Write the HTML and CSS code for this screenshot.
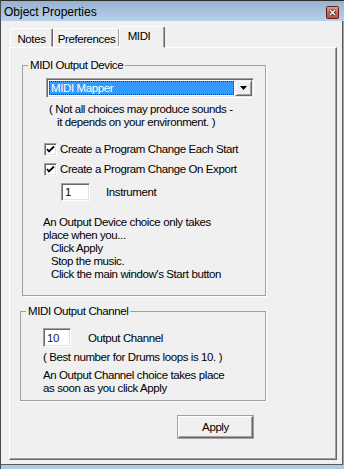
FILE: index.html
```html
<!DOCTYPE html>
<html lang="en">
	<head>
		<meta charset="UTF-8" />
		<meta name="viewport" content="width=device-width, initial-scale=1.0" />
		<title>Object Properties</title>

		<link rel="stylesheet" href="styles.css">
	</head>

	<body>
		<div class="window">
			<div class="titlebar">
				<span class="title">Object Properties</span>
				<span class="close">
					<svg width="13" height="13" viewBox="0 0 13 13">
						<defs>
							<linearGradient id="closeFill" x1="0" y1="0" x2="0" y2="1">
								<stop offset="0" stop-color="#e3a493" />
								<stop offset="0.5" stop-color="#c86554" />
								<stop offset="1" stop-color="#c2503f" />
							</linearGradient>
						</defs>
						<rect x="0.5" y="0.5" width="12" height="12" rx="1" fill="url(#closeFill)" stroke="#5e1e1e" />
						<path d="M4 4 L9 9 M9 4 L4 9" stroke="#3a1a1a" stroke-width="3" />
						<path d="M4 4 L9 9 M9 4 L4 9" stroke="#ffffff" stroke-width="1.5" />
					</svg>
				</span>
			</div>

			<div class="client">
				<div class="tabs">
					<div class="tab">Notes</div>
					<div class="tab">Preferences</div>
					<div class="tab tab--active">MIDI</div>
				</div>

				<div class="panel">
					<fieldset class="group group--device">
						<legend>MIDI Output Device</legend>

						<div class="combo">
							<span class="combo__value">MIDI Mapper</span>
							<span class="combo__button">
								<svg width="7" height="4" viewBox="0 0 7 4"><path d="M0 0 H7 L3.5 4 Z" fill="#000" /></svg>
							</span>
						</div>

						<p class="note">( Not all choices may produce sounds -<br /><span class="note__indent">it depends on your environment. )</span></p>

						<div class="check check--first">
							<span class="check__box">
								<svg width="9" height="9" viewBox="0 0 9 9"><path d="M1 4 L3 6.5 L8 1.5" stroke="#000" stroke-width="1.8" fill="none" /></svg>
							</span>
							<span>Create a Program Change Each Start</span>
						</div>
						<div class="check">
							<span class="check__box">
								<svg width="9" height="9" viewBox="0 0 9 9"><path d="M1 4 L3 6.5 L8 1.5" stroke="#000" stroke-width="1.8" fill="none" /></svg>
							</span>
							<span>Create a Program Change On Export</span>
						</div>

						<div class="field field--instrument">
							<span class="textbox textbox--instrument">1</span>
							<span>Instrument</span>
						</div>

						<p class="info info--device">
							An Output Device choice only takes<br />
							place when you...<br />
							<span class="info__step">Click Apply</span><br />
							<span class="info__step">Stop the music.</span><br />
							<span class="info__step">Click the main window's Start button</span>
						</p>
					</fieldset>

					<fieldset class="group group--channel">
						<legend>MIDI Output Channel</legend>

						<div class="field field--channel">
							<span class="textbox textbox--channel">10</span>
							<span>Output Channel</span>
						</div>

						<p class="hint">( Best number for Drums loops is 10. )</p>

						<p class="info info--channel">
							An Output Channel choice takes place<br />
							as soon as you click Apply
						</p>
					</fieldset>

					<div class="actions">
						<button class="button">Apply</button>
					</div>
				</div>
			</div>
		</div>
	</body>
</html>
```

FILE: styles.css
```css
* {
	margin: 0;
	box-sizing: border-box;
}

body {
	font-family: "Liberation Sans", Arial, sans-serif;
	font-size: 11.5px;
	letter-spacing: -0.4px;
	color: #000;
	background: #ffffff;
}

.window {
	width: 344px;
	height: 469px;
	display: flex;
	flex-direction: column;
	border-top: 1px solid #2f2f2f;
	border-left: 1px solid #4a4a4a;
	background: #aacbe9;
	padding: 0 1px 4px 0;
}

.titlebar {
	height: 20px;
	display: flex;
	align-items: center;
	justify-content: space-between;
	padding: 0 5px 0 3px;
	background: linear-gradient(#97b1cf, #b9d1ea);
	margin-right: -1px;
}

.title {
	font-size: 12px;
	letter-spacing: 0;
	padding-top: 1px;
}

.close {
	display: flex;
	margin-top: 2px;
}

.client {
	flex: 1;
	display: flex;
	flex-direction: column;
	background: #f0f0f0;
	padding: 5px 3px 4px 8px;
	border-right: 1px solid #5a5a5a;
	border-bottom: 1px solid #5a5a5a;
	box-shadow: 2px 0 0 #5cbde6;
}

/* tabs */

.tabs {
	display: flex;
	align-items: flex-end;
	padding-left: 1px;
	height: 21px;
	position: relative;
	z-index: 1;
}

.tab {
	height: 19px;
	display: flex;
	align-items: center;
	justify-content: center;
	border: 1px solid;
	border-color: #ffffff #696969 transparent #ffffff;
	box-shadow: inset -1px 0 0 #a0a0a0;
	border-radius: 2px 2px 0 0;
	background: #f0f0f0;
	padding-top: 2px;
}

.tab:nth-child(1) {
	width: 43px;
}

.tab:nth-child(2) {
	width: 67px;
}

.tab--active {
	width: 46px;
	height: 22px;
	margin-left: -1px;
	margin-bottom: -1px;
	padding-top: 0;
	padding-bottom: 3px;
	padding-right: 6px;
}

.panel {
	flex: 1;
	width: 328px;
	border: 1px solid;
	border-color: #ffffff #696969 #696969 #ffffff;
	box-shadow: inset -1px -1px 0 #a0a0a0;
}

/* group boxes */

.group {
	border: 1px solid #a0a0a0;
	box-shadow: 1px 1px 0 #ffffff;
	padding: 0;
	min-width: 0;
}

.group legend {
	line-height: 13px;
	padding: 0 2px;
	margin-left: 5px;
}

.group--device {
	width: 244px;
	margin: 11px 0 0 12px;
	padding: 6px 0 14px 0;
}

.group--channel {
	width: 246px;
	margin: 9px 0 0 10px;
	padding: 10px 0 5px 0;
}

.combo {
	width: 208px;
	height: 20px;
	margin-left: 23px;
	display: flex;
	border: 1px solid;
	border-color: #a0a0a0 #ffffff #ffffff #a0a0a0;
	box-shadow: inset 1px 1px 0 #696969, inset -1px -1px 0 #e3e3e3;
	background: #ffffff;
	padding: 2px 2px 2px 2px;
}

.combo__value {
	flex: 1;
	background: #3399ff;
	color: #ffffff;
	outline: 1px dotted #1a3a66;
	outline-offset: -1px;
	padding-left: 2px;
	line-height: 14px;
	margin-right: 1px;
}

.combo__button {
	width: 17px;
	margin: -1px -1px -1px 0;
	display: flex;
	align-items: center;
	justify-content: center;
	background: #f0f0f0;
	border: 1px solid;
	border-color: #f0f0f0 #696969 #696969 #f0f0f0;
	box-shadow: inset 1px 1px 0 #ffffff, inset -1px -1px 0 #a0a0a0;
}

.note {
	margin: 5px 0 0 26px;
	line-height: 13px;
}

.note__indent {
	padding-left: 8px;
}

.check {
	display: flex;
	align-items: center;
	gap: 3px;
	margin: 7px 0 0 21px;
	line-height: 13px;
}

.check--first {
	margin-top: 14px;
}

.check__box {
	width: 13px;
	height: 13px;
	display: flex;
	align-items: center;
	justify-content: center;
	background: #ffffff;
	border: 1px solid;
	border-color: #a0a0a0 #ffffff #ffffff #a0a0a0;
	box-shadow: inset 1px 1px 0 #696969, inset -1px -1px 0 #e3e3e3;
}

.field {
	display: flex;
	align-items: center;
}

.field--instrument {
	margin: 7px 0 0 38px;
	gap: 16px;
}

.field--channel {
	margin-left: 22px;
	gap: 17px;
}

.textbox {
	display: flex;
	align-items: center;
	background: #ffffff;
	border: 1px solid;
	border-color: #a0a0a0 #ffffff #ffffff #a0a0a0;
	box-shadow: inset 1px 1px 0 #696969, inset -1px -1px 0 #e3e3e3;
	padding-left: 3px;
}

.textbox--instrument {
	width: 29px;
	height: 18px;
}

.textbox--channel {
	width: 28px;
	height: 19px;
	color: #1c1450;
}

.info {
	line-height: 13px;
}

.info--device {
	margin: 15px 0 0 20px;
}

.info__step {
	padding-left: 8px;
}

.hint {
	margin: 4px 0 0 22px;
	line-height: 13px;
}

.info--channel {
	margin: 5px 0 0 22px;
}

.actions {
	display: flex;
	padding: 15px 0 0 168px;
}

.button {
	width: 75px;
	height: 22px;
	font: inherit;
	letter-spacing: inherit;
	color: #000;
	background: #f0f0f0;
	border: 1px solid;
	border-color: #ffffff #696969 #696969 #ffffff;
	box-shadow: inset -1px -1px 0 #a0a0a0, 0 0 0 1px #a0a0a0;
	padding: 0;
}
```
